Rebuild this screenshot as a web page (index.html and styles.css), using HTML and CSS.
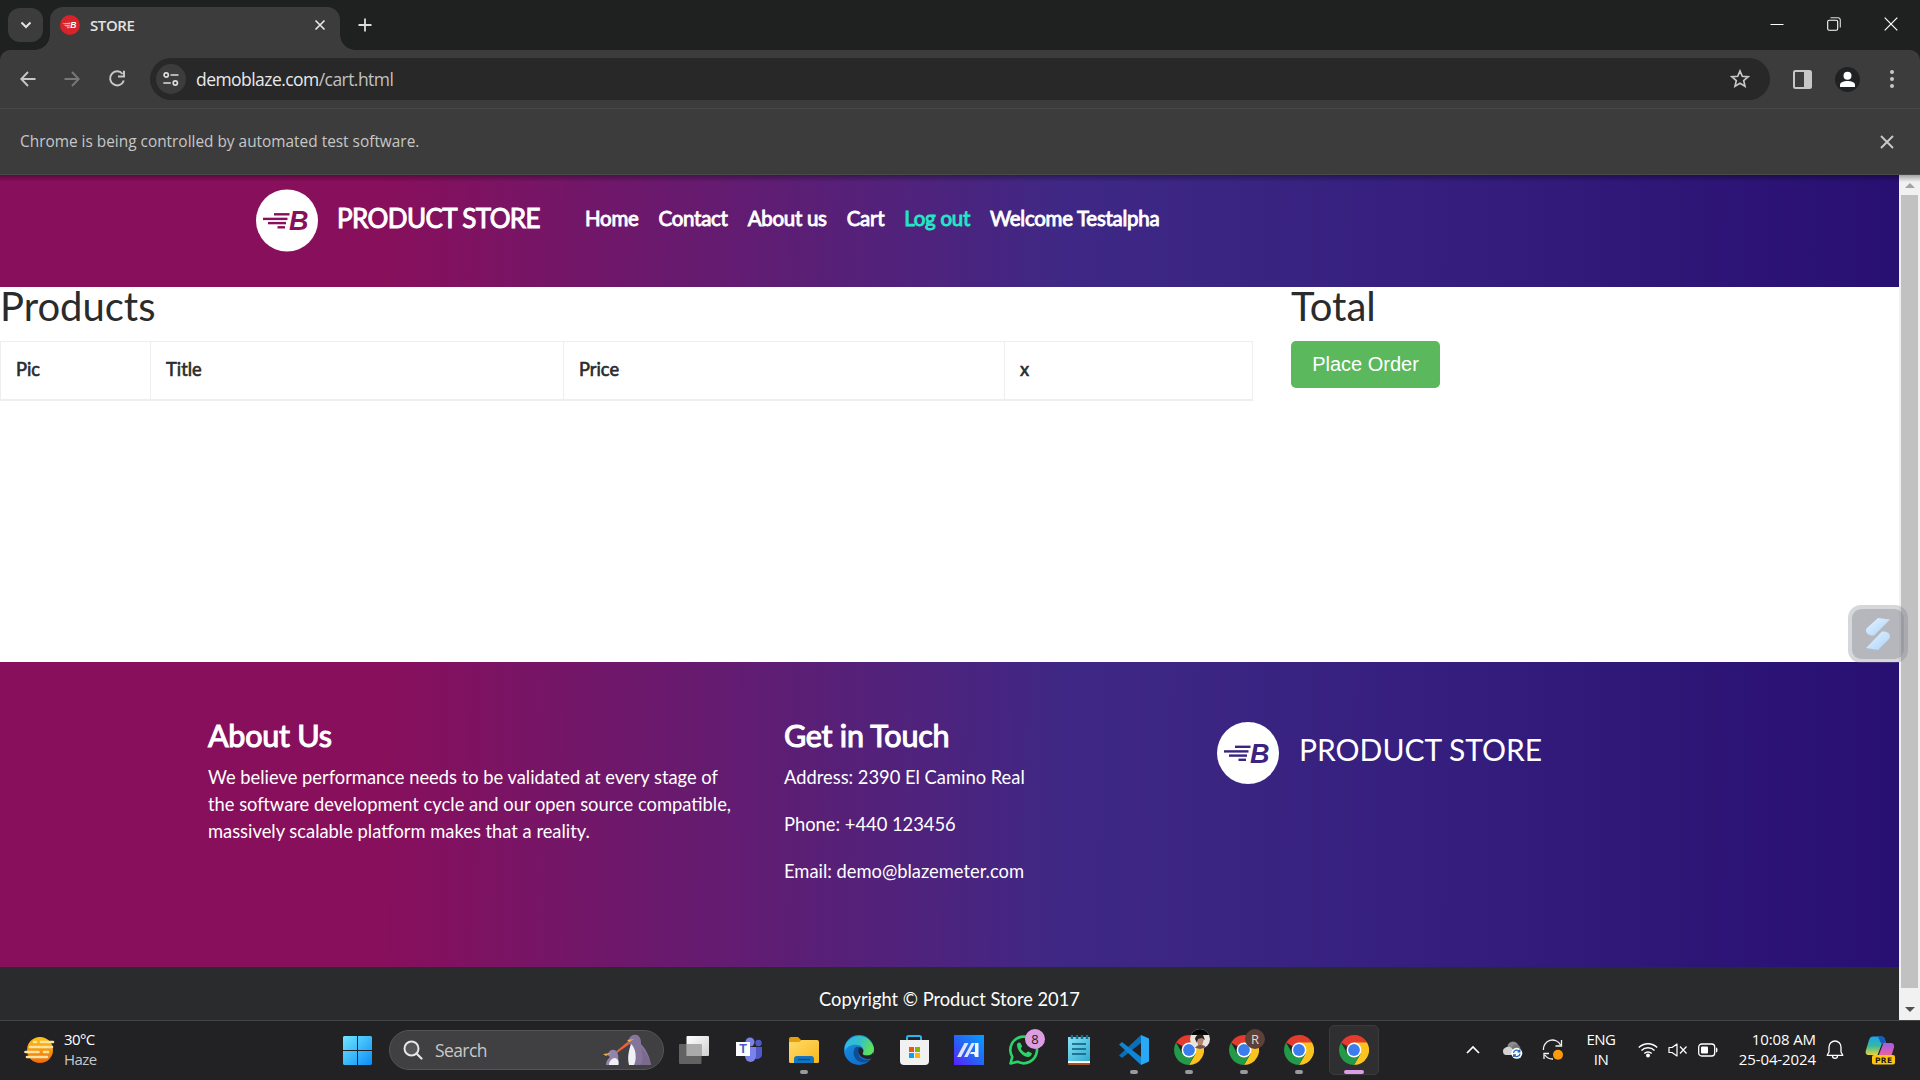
FILE: index.html
```html
<!DOCTYPE html>
<html lang="en">
<head>
<meta charset="utf-8">
<title>STORE</title>
<link rel="stylesheet" href="styles.css">
</head>
<body>
<svg width="0" height="0" class="defs">
  <defs>
    <linearGradient id="edge1" x1="0" y1="0" x2="1" y2="0.3"><stop offset="0" stop-color="#2fb6e8"/><stop offset="0.55" stop-color="#35c1c8"/><stop offset="1" stop-color="#5fe05a"/></linearGradient>
    <linearGradient id="edge2" x1="0" y1="0" x2="0.6" y2="1"><stop offset="0" stop-color="#1c93e0"/><stop offset="1" stop-color="#0c6fd0"/></linearGradient>
    <linearGradient id="winlogo" x1="0" y1="0" x2="1" y2="1"><stop offset="0" stop-color="#6fe6ff"/><stop offset="1" stop-color="#0c8df5"/></linearGradient>
    <linearGradient id="sun" x1="0" y1="0" x2="0" y2="1"><stop offset="0" stop-color="#fcc419"/><stop offset="1" stop-color="#f26a0c"/></linearGradient>
    <linearGradient id="folder" x1="0" y1="0" x2="1" y2="1"><stop offset="0" stop-color="#ffdb6b"/><stop offset="1" stop-color="#f9b81c"/></linearGradient>
    <linearGradient id="asus" x1="0" y1="1" x2="1" y2="0"><stop offset="0" stop-color="#5a1fff"/><stop offset="0.5" stop-color="#2467f5"/><stop offset="1" stop-color="#089dff"/></linearGradient>
    <linearGradient id="note" x1="0" y1="0" x2="1" y2="1"><stop offset="0" stop-color="#86e3f5"/><stop offset="1" stop-color="#2fa9cf"/></linearGradient>
    <linearGradient id="view" x1="0" y1="0" x2="1" y2="1"><stop offset="0" stop-color="#ffffff"/><stop offset="1" stop-color="#cfcfcf"/></linearGradient>
    <linearGradient id="bolt" x1="0" y1="0" x2="1" y2="1"><stop offset="0" stop-color="#e8f4ff"/><stop offset="1" stop-color="#a9d2fb"/></linearGradient>
    <linearGradient id="cop1" x1="0" y1="0" x2="0" y2="1"><stop offset="0" stop-color="#1aa5f0"/><stop offset="0.5" stop-color="#35b7a0"/><stop offset="1" stop-color="#e7d53a"/></linearGradient>
    <linearGradient id="cop2" x1="0" y1="0" x2="0" y2="1"><stop offset="0" stop-color="#a05bf0"/><stop offset="1" stop-color="#f5658c"/></linearGradient>
    <symbol id="brand" viewBox="0 0 62 62">
      <circle cx="31" cy="31" r="31" fill="#fff"/>
      <g fill="currentColor"><rect x="18" y="23.6" width="15.500" height="2.400"/><rect x="7" y="28.200" width="24.500" height="2.400"/><rect x="12" y="32.400" width="18" height="2.400"/><rect x="21.500" y="36.600" width="7.500" height="2.400"/></g>
      <text x="33" y="40.500" font-family="Liberation Sans" font-size="27" font-weight="700" font-style="italic" fill="currentColor" textLength="19.500" lengthAdjust="spacingAndGlyphs">B</text>
    </symbol>
    <symbol id="chrome" viewBox="0 0 30 30">
      <path d="M15 15 2.010 7.500A15 15 0 0 1 27.990 7.500Z" fill="#e33b2e"/>
      <path d="M15 0A15 15 0 0 1 27.990 7.500H15Z" fill="#e33b2e"/>
      <path d="M15 7.500h13A15 15 0 0 1 15 30l6.500-11.300Z" fill="#fcc31e"/>
      <path d="M2.010 7.500A15 15 0 0 0 15 30L21.400 18.800 15 15 8.500 18.750Z" fill="#229a48"/>
      <circle cx="15" cy="15" r="7.400" fill="#fff"/><circle cx="15" cy="15" r="5.900" fill="#3b7ded"/>
    </symbol>
  </defs>
</svg>

<div class="tabstrip">
  <button class="tab-search"><svg width="12" height="8" viewBox="0 0 12 8"><path d="M1.500 1.500 6 6l4.500-4.500" fill="none" stroke="#e3e3e3" stroke-width="2"/></svg></button>
  <div class="tab">
    <svg width="20" height="20" viewBox="0 0 20 20"><circle cx="10" cy="10" r="10" fill="#d8232a"/><g fill="#f4a6a8"><path d="M2 8.600 10.500 7.500 10 9.300H4z"/><path d="M4 10h6l-.4 1.500H6z"/><rect x="7" y="12" width="2.500" height="1.200"/></g><text x="10.300" y="13" font-family="Liberation Sans" font-size="8.500" font-weight="700" font-style="italic" fill="#fff">B</text></svg>
    <span class="tab-title">STORE</span>
    <svg class="tab-close" width="12" height="12" viewBox="0 0 12 12"><path d="m1.500 1.500 9 9m0-9-9 9" stroke="#e3e3e3" stroke-width="1.700"/></svg>
  </div>
  <svg class="tab-new" width="14" height="14" viewBox="0 0 14 14"><path d="M7 .5v13M.5 7h13" stroke="#dcdcdc" stroke-width="1.800"/></svg>
  <div class="win-controls">
    <svg width="14" height="14" viewBox="0 0 14 14"><path d="M.5 7.500h13" stroke="#fff"/></svg>
    <svg width="14" height="14" viewBox="0 0 14 14"><rect x=".7" y="3.200" width="10" height="10" rx="1.500" fill="none" stroke="#fff" stroke-width="1.100"/><path d="M3.500 .8H11A2.400 2.400 0 0 1 13.300 3.100V10.500" fill="none" stroke="#ddd" stroke-width="1.100"/></svg>
    <svg width="14" height="14" viewBox="0 0 14 14"><path d="m.7.7 12.600 12.600m0-12.600L.7 13.300" stroke="#fff" stroke-width="1.200"/></svg>
  </div>
</div>

<div class="toolbar-wrap"><div class="toolbar">
  <svg class="t-back" width="16" height="16" viewBox="0 0 16 16"><path d="M15.500 8H1.500M8 1 1.300 8 8 15" fill="none" stroke="#c7c7c7" stroke-width="1.900"/></svg>
  <svg class="t-fwd" width="16" height="16" viewBox="0 0 16 16"><path d="M.5 8h14M8 1l6.700 7L8 15" fill="none" stroke="#787878" stroke-width="1.900"/></svg>
  <svg class="t-reload" width="18" height="18" viewBox="0 0 18 18"><path d="M14.600 4A7 7 0 1 0 15.800 10.500" fill="none" stroke="#c7c7c7" stroke-width="2"/><path d="M16 .8V6.600H10" fill="none" stroke="#c7c7c7" stroke-width="2"/></svg>
  <div class="omnibox">
    <span class="site-info"><svg width="16" height="14" viewBox="0 0 16 14"><g fill="none" stroke="#dcdcdc" stroke-width="1.700"><circle cx="3.200" cy="3" r="2.100"/><path d="M7.500 3H15.500M.3 11h7.500"/><circle cx="12.300" cy="11" r="2.100"/></g></svg></span>
    <span class="url">demoblaze.com<i>/cart.html</i></span>
    <svg class="star" width="20" height="20" viewBox="0 0 20 20"><path d="m10 2 2.300 5.300 5.800.5-4.400 3.800 1.300 5.700-5-3-5 3 1.300-5.700L1.900 7.800l5.800-.5Z" fill="none" stroke="#c7c7c7" stroke-width="1.700"/></svg>
  </div>
  <svg class="t-side" width="19" height="19" viewBox="0 0 19 19"><rect x="1" y="1" width="17" height="17" rx="1.500" fill="none" stroke="#c7c7c7" stroke-width="2"/><rect x="11" y="1" width="7" height="17" fill="#c7c7c7"/></svg>
  <svg class="t-user" width="25" height="25" viewBox="0 0 25 25"><circle cx="12.500" cy="12.500" r="12.500" fill="#202122"/><circle cx="12.500" cy="8.800" r="4" fill="#fff"/><path d="M5 20v-2c0-3 4-4 7.500-4s7.500 1 7.500 4v2Z" fill="#fff"/></svg>
  <svg class="t-menu" width="4" height="18" viewBox="0 0 4 18"><g fill="#c7c7c7"><circle cx="2" cy="2" r="2"/><circle cx="2" cy="9" r="2"/><circle cx="2" cy="16" r="2"/></g></svg>
</div></div>

<div class="infobar"><span>Chrome is being controlled by automated test software.</span>
  <svg width="14" height="14" viewBox="0 0 14 14"><path d="m1 1 12 12M13 1 1 13" stroke="#c7c7c7" stroke-width="2"/></svg></div>

<div class="viewport">
  <div class="page">
    <header class="masthead">
      <svg class="brand-mark plum" width="62" height="63"><use href="#brand"/></svg>
      <span class="brand-name">PRODUCT STORE</span>
      <nav class="menu"><a>Home</a><a>Contact</a><a>About us</a><a>Cart</a><a class="active">Log out</a><a>Welcome Testalpha</a></nav>
    </header>
    <main class="cart">
      <section class="products"><h2>Products</h2>
        <table><colgroup><col class="c1"><col class="c2"><col class="c3"><col class="c4"></colgroup><tr><th>Pic</th><th>Title</th><th>Price</th><th>x</th></tr></table>
      </section>
      <section class="total"><h2>Total</h2><button class="order">Place Order</button></section>
    </main>
    <footer class="foot">
      <section class="about"><h4>About Us</h4><p>We believe performance needs to be validated at every stage of<br>the software development cycle and our open source compatible,<br>massively scalable platform makes that a reality.</p></section>
      <section class="touch"><h4>Get in Touch</h4><p>Address: 2390 El Camino Real</p><p>Phone: +440 123456</p><p>Email: demo@blazemeter.com</p></section>
      <section class="foot-brand"><svg class="brand-mark indigo" width="62" height="62"><use href="#brand"/></svg><span>PRODUCT STORE</span></section>
    </footer>
    <div class="copyright"><span>Copyright © Product Store 2017</span></div>
  </div>
  <div class="scrollbar"><i class="up"></i><b class="thumb"></b><i class="down"></i></div>
  <div class="float-widget"><svg width="26" height="34" viewBox="0 0 26 34"><path d="M13 1 25 2.500 9 18.500C5 19 1 17 1 13.500 1 12 2 11 3 10Z" fill="url(#bolt)"/><path d="M13 33 1 31 17 14.500c4-.5 8 1.500 8 5 0 1.500-1 2.500-2 3.500Z" fill="url(#bolt)"/></svg></div>
</div>

<div class="taskbar">
  <div class="weather">
    <svg width="31" height="28" viewBox="0 0 31 28"><circle cx="16" cy="14" r="13" fill="url(#sun)"/><g stroke="#fbe3a0" stroke-width="2.600" stroke-linecap="round"><path d="M10 6h2M17 6h12M6 11h22M1.500 16h13M20 16h4M3 21h20"/></g></svg>
    <div class="lines"><p>30°C</p><p class="dim">Haze</p></div>
  </div>
  <svg class="start" width="29" height="29" viewBox="0 0 29 29"><path d="M1 0h13v14H0V1zM15 0h13l1 1v13H15zM0 15h14v14H1l-1-1zM15 15h14v13l-1 1H15z" fill="url(#winlogo)"/></svg>
  <div class="search">
    <svg width="20" height="20" viewBox="0 0 20 20"><circle cx="8.500" cy="8.500" r="7" fill="#555" stroke="#e6e6e6" stroke-width="2"/><path d="m13.500 13.500 5 5" stroke="#e6e6e6" stroke-width="2.200" stroke-linecap="round"/></svg>
    <span>Search</span>
    <svg class="penguins" width="50" height="32" viewBox="0 0 50 32"><path d="M28 31c-2-9-1-15 1-20-3-1-4-3-2-6 1-3 4-5 8-4 4 2 4 6 4 9 5 5 9 13 10 21Z" fill="#85759a"/><path d="M29 10c5 4 6 15 3 21h-5c-2-8 0-15 2-21Z" fill="#eef1f5"/><path d="M38 31c4-4 3-10 1-17 5 5 9 11 10 17Z" fill="#7a6a8c"/><path d="M26 7.500 14 17.500l1 1.500 12-8.500Z" fill="#e8613a"/><path d="m25 6 7-1-5 3Z" fill="#e9b24c"/><path d="M4 31c0-4 2-6 4-8-2-1-3-3-1-5 2-3 6-3 8 0 2 4 1 9 2 13Z" fill="#9384a8"/><path d="M7 31c0-4 3-7 6-7 4 1 4 5 3 7Z" fill="#eef1f5"/><path d="m1 20 8-1-5 3Z" fill="#e9b24c"/></svg>
  </div>
  <div class="apps">
    <div class="app"><svg width="30" height="28" viewBox="0 0 30 28"><rect x="7.500" width="22.500" height="20" rx="1" fill="url(#view)"/><rect y="8" width="22.500" height="20" rx="1" fill="#6d6d6d" opacity=".85"/><rect x="7.500" y="8" width="15" height="12" fill="#aaa"/></svg></div>
    <div class="app"><svg width="28" height="26" viewBox="0 0 28 26"><circle cx="15" cy="5" r="4.500" fill="#7b83eb"/><circle cx="23.500" cy="6" r="3.200" fill="#5059c9"/><path d="M19 10h8v8a5 5 0 0 1-8 3z" fill="#5059c9"/><path d="M10 10h11v9a5.500 6 0 0 1-11 0z" fill="#7b83eb"/><rect x="1" y="5" width="14" height="14" fill="#fff"/><text x="8" y="16.300" font-family="Liberation Sans" font-size="12.500" font-weight="700" text-anchor="middle" fill="#5059c9">T</text></svg></div>
    <div class="app run"><svg width="30" height="28" viewBox="0 0 30 28"><path d="M0 3a2 2 0 0 1 2-2h7l3 3h16v8H0z" fill="#e3a008"/><path d="M0 6h10l3-2h15a2 2 0 0 1 2 2v19.500a1.500 1.500 0 0 1-1.500 1.500h-27A1.500 1.500 0 0 1 0 25.500z" fill="url(#folder)"/><path d="M5 27v-4a3 3 0 0 1 3-3h14a3 3 0 0 1 3 3v4z" fill="#1375bf"/><path d="M9 23.500h12" stroke="#0a4a80" stroke-width="1.300"/></svg></div>
    <div class="app"><svg width="30" height="30" viewBox="0 0 30 30"><circle cx="15" cy="15" r="15" fill="url(#edge2)"/><path d="M1 11A15 15 0 0 1 30 14c0 5-4 6.500-8 6.500-3 0-4-1.500-3-3 2-3-1-7-5-7.500C8 9 3 11 1 16Z" fill="url(#edge1)"/><path d="M12 12c-5 4-2 14 5 15 4 1 8-.5 10.500-3-6 2-12 0-13-5-.5-3 .5-6 3-7Z" fill="#124c91"/><path d="M15 13c3-1 5 2 4 4.500-1 1.500 0 3 3 3 2.500 0 5.500 0 7-3l1 3-2 3c-5 1-10 0-12-3-2-2-2-6-1-7.500Z" fill="#232224"/></svg></div>
    <div class="app"><svg width="30" height="30" viewBox="0 0 30 30"><path d="M8 6V2.500A1.500 1.500 0 0 1 9.500 1h11A1.500 1.500 0 0 1 22 2.500V6" fill="none" stroke="#2bb5f0" stroke-width="2"/><path d="M1 5h29v21a4 4 0 0 1-4 4H5a4 4 0 0 1-4-4z" fill="#f1f1f1"/><path fill="#f1511b" d="M10 12h5v5h-5z"/><path fill="#80b900" d="M16 12h5v5h-5z"/><path fill="#00a4ef" d="M10 18h5v5h-5z"/><path fill="#fbb700" d="M16 18h5v5h-5z"/></svg></div>
    <div class="app"><svg width="30" height="30" viewBox="0 0 30 30"><path fill="url(#asus)" d="M0 0h30v30H0z"/><path d="M3 22 10.500 8h4L7 22ZM10 22 17.500 8h3.500L13.500 22Z" fill="#dbe7ff"/><path d="M21 8h3.500v14H21l-1-3h-4l1-2h4Z" fill="#f3f6ff"/></svg></div>
    <div class="app"><svg width="30" height="30" viewBox="0 0 30 30"><path d="M1.500 28.500 3.300 21.800A13.300 13.300 0 1 1 8.500 26.700Z" fill="#222" stroke="#2bd468" stroke-width="2.600" stroke-linejoin="round"/><path d="M8 10c0-2 2-3.500 3.500-2l1.500 3c.3 1-1.500 2-1 3 1.200 2 2.700 3.200 4.500 4 1 .4 2-1.800 3-1.400l3 1.500c1 1.200-1 3.700-3 3.900-5 .3-11.500-6.500-11.500-12Z" fill="#2bd468"/></svg><span class="badge pink">8</span></div>
    <div class="app"><svg width="22" height="30" viewBox="0 0 22 30"><rect y="25" width="22" height="5" rx="1" fill="#a8561c"/><rect y="24" width="22" height="4" fill="#fff"/><path fill="url(#note)" d="M0 2h22v24H0z"/><path d="M4 0v4M9 0v4M14 0v4M19 0v4" stroke="#14708e" stroke-width="2.400"/><path d="M4 9h14M4 14h14M4 19h14" stroke="#0b5a7d" stroke-width="1.700"/></svg></div>
    <div class="app run"><svg width="30" height="30" viewBox="0 0 30 30"><path d="M0 20.500 22 0v8L3 23Z" fill="#0a6fb8"/><path d="M3 7 22 22v8L0 9.500Z" fill="#1185d4"/><path d="M22 0 30 3.500v23L22 30Z" fill="#29a9f3"/></svg></div>
    <div class="app run"><svg width="30" height="30"><use href="#chrome"/></svg><span class="badge photo"><svg width="20" height="20" viewBox="0 0 20 20"><path fill="#e9e5de" d="M0 0h20v20H0z"/><path fill="#080808" d="M0 0h20v6H0z"/><path d="M7 7q5-3 7 3l-2 7H8Z" fill="#b48470"/><path d="M5 10q1-6 8-4l2 5-3-2-4 1-1 4Z" fill="#282020"/><path d="M4 20q4-6 11-3l1 3Z" fill="#76564a"/></svg></span></div>
    <div class="app run"><svg width="30" height="30"><use href="#chrome"/></svg><span class="badge brown">R</span></div>
    <div class="app run"><svg width="30" height="30"><use href="#chrome"/></svg></div>
    <div class="app current"><svg width="30" height="30"><use href="#chrome"/></svg></div>
  </div>
  <div class="tray">
    <svg class="y-up" width="14" height="10" viewBox="0 0 14 10"><path d="m1 8 6-6 6 6" fill="none" stroke="#fff" stroke-width="1.700"/></svg>
    <svg class="y-cloud" width="21" height="18" viewBox="0 0 21 18"><circle cx="11" cy="6" r="5.500" fill="#8c8c8c"/><circle cx="14" cy="8" r="4.500" fill="#787878"/><path d="M3.500 14a4 4 0 0 1 0-7.500c3-1.500 6-.5 7.500 2.500L15 14z" fill="#d3d3d3"/><circle cx="14.800" cy="12.300" r="5.500" fill="#fff"/><path d="M11.500 12a3.300 3.300 0 0 1 6-1.500M18 12.600a3.300 3.300 0 0 1-6 1.500M17.800 8.500v2.300h-2.300M11.700 16v-2.200H14" fill="none" stroke="#1769c0" stroke-width="1.300"/></svg>
    <svg class="y-sync" width="22" height="22" viewBox="0 0 22 22"><path d="M1.500 11A9 9 0 0 1 18.500 6M19.500 1v6h-6M2 20v-5.500h5M3 16a9 9 0 0 0 8 4" fill="none" stroke="#f2f2f2" stroke-width="1.300"/><circle cx="16" cy="15.800" r="5" fill="#ff9a0c"/></svg>
    <div class="lang lines"><p>ENG</p><p>IN</p></div>
    <svg class="y-wifi" width="20" height="16" viewBox="0 0 20 16"><g fill="none" stroke="#fff" stroke-width="1.500"><path d="M.8 5.500a13 13 0 0 1 18.400 0M3.500 8.500a9.200 9.200 0 0 1 13 0M6.300 11.500a5.300 5.300 0 0 1 7.400 0"/></g><circle cx="10" cy="13.500" r="2" fill="#fff"/></svg>
    <svg class="y-mute" width="20" height="14" viewBox="0 0 20 14"><path d="M1 4.500h3L9 1v12L4 9.500H1Z" fill="none" stroke="#fff" stroke-width="1.200" stroke-linejoin="round"/><path d="m12 3.500 6.500 7M18.500 3.500l-6.500 7" stroke="#fff" stroke-width="1.200"/></svg>
    <svg class="y-batt" width="20" height="14" viewBox="0 0 20 14"><rect x=".7" y="1" width="16" height="12" rx="3" fill="none" stroke="#fff" stroke-width="1.300"/><rect x="3" y="3.500" width="7" height="7" rx="1" fill="#fff"/><path d="M18 4.500c2 0 2 5 0 5z" fill="#fff"/></svg>
    <div class="clock lines"><p>10:08 AM</p><p>25-04-2024</p></div>
    <svg class="y-bell" width="18" height="20" viewBox="0 0 18 20"><path d="M9 1a6 6 0 0 0-6 6v5l-1.800 3.300H16.800L15 12V7a6 6 0 0 0-6-6ZM6.500 16a2.500 2.300 0 0 0 5 0" fill="none" stroke="#fff" stroke-width="1.300" stroke-linejoin="round"/></svg>
    <svg class="y-copilot" width="30" height="29" viewBox="0 0 30 29"><path d="M8 .5h8.500c2 0 3 1 3.500 3l1 4h-4L12.500 19H4c-3 0-4-2-3-5L4 4C5 1.500 6 .5 8 .5Z" fill="url(#cop1)"/><path d="M13 .5h3.500c2 0 3 1 3.500 3l1 3-5 1Z" fill="#165bbd"/><path d="M18.500 7H26c2.500 0 3.500 2 3 4.500L26 21H13Z" fill="url(#cop2)"/><rect x="7" y="19" width="23" height="9.500" rx="2" fill="#ffc60b"/><text x="10" y="26.500" font-family="DejaVu Sans" font-size="7.500" font-weight="700" fill="#1c1c1c" textLength="17">PRE</text></svg>
  </div>
</div>
</body>
</html>
```
FILE: styles.css
```css
* { box-sizing: border-box; margin: 0; padding: 0; }
html, body { width: 1920px; height: 1080px; overflow: hidden; }
body { display: flex; flex-direction: column; background: #1f2120; font-family: "Open Sans", "Noto Sans", sans-serif; }
svg { display: block; flex: none; }
button { border: 0; font: inherit; }
.defs { position: absolute; }

/* browser window */
.tabstrip { height: 50px; flex: none; display: flex; align-items: flex-start; background: #1f2120; padding-left: 8px; }
.tab-search { width: 35px; height: 34px; margin-top: 8px; border-radius: 12px; background: #3c3c3c; display: grid; place-items: center; }
.tab { position: relative; width: 290px; height: 43px; margin: 7px 0 0 7px; padding: 0 14px 7px 10px; border-radius: 13px 13px 0 0; background: #3c3c3c; display: flex; align-items: center; }
.tab::before, .tab::after { content: ""; position: absolute; bottom: 0; width: 15px; height: 15px; }
.tab::before { left: -15px; background: radial-gradient(circle at 0 0, transparent 14.500px, #3c3c3c 15px); }
.tab::after { right: -15px; background: radial-gradient(circle at 100% 0, transparent 14.500px, #3c3c3c 15px); }
.tab-title { margin-left: 10px; color: #e3e3e3; font-size: 15px; line-height: 20px; font-weight: 600; letter-spacing: -0.4px; }
.tab-close { margin-left: auto; }
.tab-new { margin: 18px 0 0 18px; }
.win-controls { margin: 17px 22px 0 auto; display: flex; gap: 43px; }

.toolbar-wrap { height: 59px; flex: none; background: #1f2120; }
.toolbar { height: 59px; display: flex; align-items: center; background: #3c3c3c; border-bottom: 1px solid #494949; border-radius: 10px 10px 0 0; padding-left: 20px; }
.t-fwd { margin-left: 28px; }
.t-reload { margin-left: 28px; }
.omnibox { width: 1620px; height: 42px; margin-left: 24px; padding: 0 20px 0 6px; border-radius: 21px; background: #282828; display: flex; align-items: center; }
.site-info { width: 30px; height: 30px; border-radius: 50%; background: #3c3c3c; display: grid; place-items: center; }
.url { margin-left: 10px; color: #e9e9e9; font-size: 17.500px; letter-spacing: -0.55px; }
.url i { font-style: normal; color: #c2c2c2; }
.star { margin-left: auto; }
.t-side { margin-left: 23px; }
.t-user { margin-left: 23px; }
.t-menu { margin-left: 30px; }

.infobar { height: 66px; flex: none; padding: 0 26px 0 20px; display: flex; align-items: center; justify-content: space-between; background: #3c3c3c; border-bottom: 1px solid #4a4a4a; color: #c7c7c7; font-size: 15.400px; }

/* page */
.viewport { position: relative; height: 845px; flex: none; display: flex; background: #fff; font-family: Lato, sans-serif; }
.viewport::before { content: ""; position: absolute; inset: 0 0 auto 0; height: 7px; background: linear-gradient(rgba(0,0,0,.32), rgba(0,0,0,0)); }
.page { width: 1899px; display: flex; flex-direction: column; }
.masthead, .foot { color: #fff; background: linear-gradient(90.500deg, #880f5c 0%, #880f5c 20%, #3f2885 56%, #3a2482 66%, #280f72 100%); }
.masthead { height: 112px; display: flex; padding: 14px 0 0 256px; }
.plum { color: #880f5c; }
.indigo { color: #39247f; }
.brand-name { width: 202px; margin-left: 19px; font-size: 26px; line-height: 58px; letter-spacing: -0.6px; white-space: nowrap; -webkit-text-stroke: 1px #fff; }
.menu { margin-left: 46px; display: flex; gap: 20px; font-size: 20.500px; line-height: 59px; letter-spacing: -0.28px; white-space: nowrap; -webkit-text-stroke: 0.9px currentColor; }
.active { color: #22e8c6; }

.cart { height: 375px; display: flex; color: #292b2c; }
.products { width: 1253px; }
h2 { font-size: 40px; line-height: 38px; font-weight: 400; margin-bottom: 16px; }
table { width: 1253px; border-collapse: collapse; table-layout: fixed; }
.c1 { width: 150px; } .c2 { width: 413px; } .c3 { width: 441px; } .c4 { width: 248px; }
th { height: 58px; padding: 0 15px 3px; text-align: left; font-size: 18.300px; font-weight: 400; -webkit-text-stroke: 0.6px #292b2c; border: 1px solid #eceeef; border-bottom-width: 2px; }
.total { margin-left: 38px; }
.order { width: 149px; height: 47px; border-radius: 5px; background: #5cb85c; color: #fff; font: 20px "Liberation Sans", Arial, sans-serif; }

.foot { height: 305px; display: flex; padding: 55px 0 0 208px; font-size: 18.340px; line-height: 27px; white-space: nowrap; }
h4 { font-size: 30.500px; line-height: 36px; font-weight: 400; margin-bottom: 11px; letter-spacing: -0.25px; -webkit-text-stroke: 1.100px #fff; }
.about { width: 576px; }
.touch { width: 433px; }
.touch p { margin-bottom: 20px; }
.foot-brand { display: flex; padding-top: 5px; font-size: 30px; line-height: 55px; }
.foot-brand span { margin-left: 20px; }
.copyright { height: 53px; padding-top: 19px; text-align: center; background: #292b2c; color: #fff; font-size: 18.300px; line-height: 27px; }

.scrollbar { width: 21px; background: #f1f1f1; display: flex; flex-direction: column; align-items: center; padding: 8px 0; }
.scrollbar .up { border: 5px solid transparent; border-top: 0; border-bottom-color: #a3a3a3; }
.scrollbar .down { border: 5px solid transparent; border-bottom: 0; border-top-color: #505050; margin-top: auto; }
.thumb { width: 17px; height: 793px; margin-top: 7px; background: #c1c1c1; }
.float-widget { position: absolute; left: 1848px; top: 430px; width: 60px; height: 58px; border-radius: 13px; border: 4px solid rgba(120,122,135,.3); background: rgba(125,127,138,.56); background-clip: padding-box; display: grid; place-items: center; }

/* taskbar */
.taskbar { height: 60px; flex: none; display: flex; align-items: center; padding-bottom: 1px; background: #222123; border-top: 1px solid #454545; color: #fff; font-size: 15px; line-height: 20px; white-space: nowrap; }
.lines { padding-bottom: 3px; }
.weather { width: 343px; padding-left: 24px; display: flex; align-items: center; gap: 9px; letter-spacing: -0.6px; }
.dim { color: #c8c8c8; }
.search { width: 275px; height: 40px; margin-left: 17px; padding: 0 11px 0 13px; display: flex; align-items: center; border: 1px solid #545456; border-radius: 20px; background: #403f41; color: #c9c9c9; font-size: 17.500px; letter-spacing: -0.6px; }
.search span { margin-left: 12px; }
.penguins { margin-left: auto; }
.apps { margin-left: 5px; display: flex; gap: 5px; }
.app { position: relative; width: 50px; height: 50px; border-radius: 5px; display: grid; place-items: center; }
.app.run::after, .app.current::after { content: ""; position: absolute; bottom: 1px; left: 21px; width: 8px; height: 4px; border-radius: 2px; background: #9a9a9a; }
.app.current { background: #2f2e31; border: 1px solid #3b3a3d; }
.app.current::after { left: 14px; bottom: 0; width: 20px; background: #dd9de6; }
.badge { position: absolute; left: 26px; top: 4px; width: 20px; height: 20px; border-radius: 50%; overflow: hidden; text-align: center; line-height: 20px; font-size: 13px; }
.pink { background: #dc9de3; color: #222; }
.brown { background: #5d4037; color: #e0d8d5; }
.tray { width: 541px; display: flex; align-items: center; }
.y-up { margin-left: 87px; }
.y-cloud { margin-left: 22px; }
.y-sync { margin-left: 19px; }
.lang { width: 30px; margin-left: 22px; text-align: center; letter-spacing: -0.5px; }
.y-wifi { margin-left: 22px; }
.y-mute { margin-left: 10px; }
.y-batt { margin-left: 10px; }
.clock { width: 80px; margin-left: 18px; display: flex; flex-direction: column; align-items: flex-end; letter-spacing: -0.1px; }
.y-bell { margin-left: 10px; }
.y-copilot { margin-left: 21px; }
```
